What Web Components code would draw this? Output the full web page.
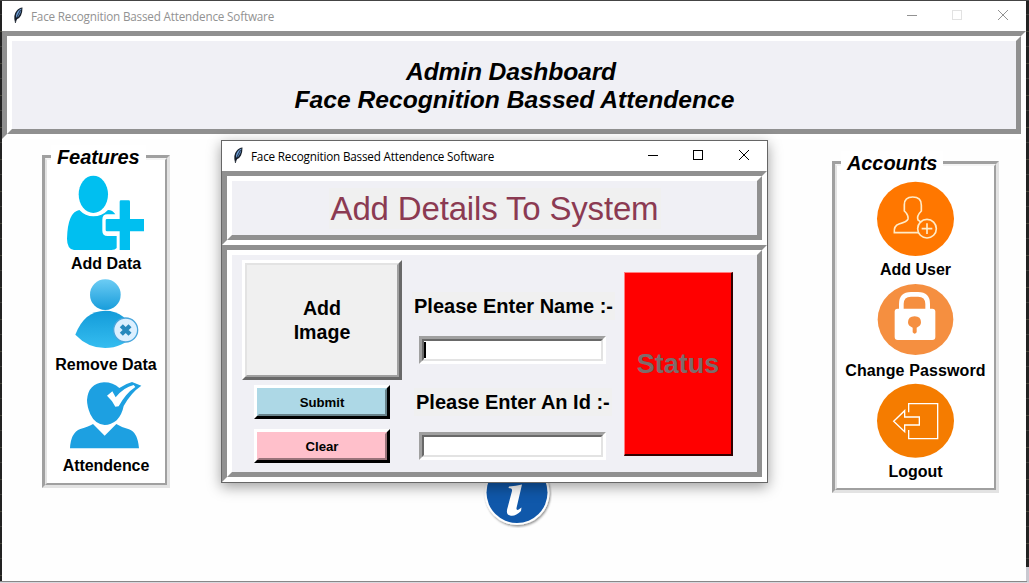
<!DOCTYPE html>
<html lang="en">
<head>
<meta charset="utf-8">
<title>Face Recognition Bassed Attendence Software</title>
<style>
html,body{margin:0;height:100%;overflow:hidden}
body{font-family:"Liberation Sans",Arial,sans-serif;color:#000}
</style>
</head>
<body>
<attendance-desktop></attendance-desktop>
<script>
function define(name, html) {
  const t = document.createElement('template');
  t.innerHTML = html;
  customElements.define(name, class extends HTMLElement {
    constructor() {
      super();
      this.attachShadow({mode: 'open'}).appendChild(t.content.cloneNode(true));
    }
  });
}

define('title-bar', `
<style>
:host{display:flex;align-items:center;height:30px;background:#fff;color:var(--fg,#000);box-sizing:border-box;padding-left:9px;flex:none}
.feather{width:14px;height:18px;margin:-2px 6px 0 0}
.name{flex:1;font:11.7px/30px "Open Sans","Noto Sans",sans-serif;letter-spacing:-.18px;white-space:nowrap}
.ctl{width:46px;height:30px;flex:none;display:block;shape-rendering:crispEdges;margin-right:-1px}
.ctl path,.ctl rect{fill:none;stroke:currentColor}
.max{color:var(--max,#000)}
.ctl.close{shape-rendering:auto;margin-right:0}
</style>
<svg class="feather" viewBox="0 0 14 18"><path d="M4 16.500 Q2 9 5.500 5 Q8 1.500 11.500 1.500 Q11.500 6 10 9.500 Q8.500 12.500 5.500 13.500Z" fill="#17202c"/><path d="M5 12 Q4.500 7.500 7.500 4.500 Q9 3 10.500 2.500 Q10 7 7.500 10.500" fill="#6d9dd4"/><path d="M4.300 17 L6 11 L9.500 4" stroke="#0b1220" stroke-width=".8" fill="none"/></svg>
<span class="name"><slot></slot></span>
<svg class="ctl" viewBox="0 0 46 30"><path d="M17 14.500H27"/></svg>
<svg class="ctl max" viewBox="0 0 46 30"><rect x="17.500" y="9.500" width="9" height="9"/></svg>
<svg class="ctl close" viewBox="0 0 46 30"><path d="M18 9 L28 19 M28 9 L18 19"/></svg>`);

define('groove-frame', `
<style>
:host{display:block;box-sizing:border-box;border:5px solid;border-color:#909090 #fff #fff #909090}
.in{height:100%;box-sizing:border-box;border:5px solid;border-color:#fff #909090 #909090 #fff;background:#f0f0f5}
</style><div class="in"><slot></slot></div>`);

define('label-frame', `
<style>
:host{display:block;box-sizing:border-box;border:3px solid;border-color:#a0a0a0 #e3e3e3 #e3e3e3 #a0a0a0;background:#fff}
.in{height:100%;box-sizing:border-box;border:2px solid;border-color:#f4f4f4 #a0a0a0 #a0a0a0 #e3e3e3;display:flex;flex-direction:column;align-items:center}
.legend{align-self:flex-start;background:#fff;font:italic bold 20px/24px "Liberation Sans",Arial,sans-serif;letter-spacing:-.1px;margin:-15px 0 1px 4px;padding:0 6px;height:24px;white-space:nowrap}
</style><div class="in"><span class="legend"><slot name="legend"></slot></span><slot></slot></div>`);

define('icon-action', `
<style>
:host{display:flex;flex-direction:column;align-items:center;font:bold 16px/24px "Liberation Sans",Arial,sans-serif;letter-spacing:var(--ls,0);white-space:nowrap}
.t{margin-top:var(--gap,0);padding-top:1px;margin-bottom:-1px}
</style><slot name="icon"></slot><span class="t"><slot></slot></span>`);

define('relief-button', `
<style>
:host{display:block;box-sizing:border-box;border:3px solid;border-color:#fff var(--dark) var(--dark) #fff}
.in{height:100%;box-sizing:border-box;border:2px solid;border-color:var(--hi) var(--lo) var(--lo) var(--hi);background:var(--bg);display:flex;align-items:center;justify-content:center;text-align:center;font-weight:bold}
</style><div class="in"><slot></slot></div>`);

define('sunken-entry', `
<style>
:host{display:block;box-sizing:border-box;width:187px;height:28px;border:3px solid;border-color:#a0a0a0 #fff #fff #a0a0a0}
.in{height:100%;box-sizing:border-box;border:2px solid;border-color:#696969 #e3e3e3 #e3e3e3 #696969;background:#fff;padding-top:1px}
.caret{display:none;width:2px;height:16px;background:#000}
:host([focused]) .caret{display:block}
</style><div class="in"><div class="caret"></div></div>`);

define('main-window', `
<style>
:host{display:flex;flex-direction:column;background:#fefefe;width:1024px;height:580px;--fg:#929292;--max:#e2e2e2}
groove-frame{height:108px;flex:none}
h1{margin:0;height:100%;box-sizing:border-box;display:flex;flex-direction:column;justify-content:center;align-items:center;font:italic bold 24.65px/28px "Liberation Sans",Arial,sans-serif;white-space:nowrap;padding:1px 0 0 1px}
h1 span{display:block}
h1 span:first-child{letter-spacing:-.15px;margin-right:7px}
.body{display:flex;align-items:flex-start;justify-content:space-between;padding:16px 27px 0 40px}
.f{width:128px;height:333px}
.a{width:167px;height:332px;margin-top:6px}
.info{width:70px;height:70px;margin-top:303px;margin-left:32px}
icon-action svg{display:block}
.f svg{margin-left:-2px}
</style>
<title-bar>Face Recognition Bassed Attendence Software</title-bar>
<groove-frame><h1><span>Admin Dashboard</span><span>Face Recognition Bassed Attendence</span></h1></groove-frame>
<div class="body">
<label-frame class="f"><span slot="legend">Features</span>
<icon-action style="margin-top:5px"><svg slot="icon" width="80" height="76" viewBox="105 105 240 228"><g fill="#00bff0"><ellipse cx="190" cy="163" rx="44" ry="56"/><path d="M148 210 Q166 229 190 229 Q216 229 234 210 Q248 210 256 223 H232 Q217 223 217 239 V272 Q217 288 233 288 H260 V324 Q256 330 244 330 H132 Q111 327 111 296 Q113 216 148 210Z"/><path d="M273 181H296Q300 181 300 185V237H342V274H300V330H269V274H231Q227 274 227 270V241Q227 237 231 237H269V185Q269 181 273 181Z"/></g></svg>Add Data</icon-action>
<icon-action style="margin-top:3px;--gap:3px"><svg slot="icon" style="margin-left:1px" width="66" height="71" viewBox="132 -96 198 213"><defs><linearGradient id="h" x2="0" y2="1"><stop stop-color="#6cccf4"/><stop offset="1" stop-color="#189ddb"/></linearGradient><linearGradient id="b" x2="0" y2="1"><stop stop-color="#139bd9"/><stop offset="1" stop-color="#35bdf0"/></linearGradient></defs><circle cx="226" cy="-46" r="46" fill="url(#h)"/><path d="M136 74 Q163 2 226 2 Q287 2 315 72 Q278 114 225 114 Q174 114 136 74Z" fill="url(#b)"/><circle cx="287" cy="60" r="36" fill="#dcf0ff" stroke="#49a6dc" stroke-width="4"/><path d="M274 47 L300 73 M300 47 L274 73" stroke="#2789bd" stroke-width="13"/></svg>Remove Data</icon-action>
<icon-action style="margin-top:5px;--gap:3px;--ls:-.05px"><svg slot="icon" style="margin-left:0" width="73" height="69" viewBox="120 211 219 207"><path d="M225 215 Q253 215 271 232 Q290 219 309 214 L337 225 Q306 246 284 286 Q279 312 263 329 Q246 343 227 343 Q198 341 184 311 Q174 287 174 268 Q178 218 225 215Z" fill="#1da0e1"/><path d="M234 255 L250 242 L260 260 Q284 230 314 223 L319 229 Q290 248 269 287 L259 288 Q248 267 234 255Z" fill="#fff"/><path d="M192 340 L227 375 L262 340 Q277 350 300 356 Q326 365 330 413 H123 Q125 366 154 355 Q180 347 192 340Z" fill="#1da0e1"/></svg>Attendence</icon-action>
</label-frame>
<svg class="info" viewBox="0 0 70 70"><defs><filter id="s" x="-20%" y="-20%" width="140%" height="140%"><feDropShadow dx="1" dy="1.500" stdDeviation="1" flood-opacity=".45"/></filter></defs><circle cx="35" cy="34.500" r="32.500" fill="#fff" filter="url(#s)"/><circle cx="35" cy="34.500" r="30.500" fill="#1058aa"/><path d="M27 28.500 Q34 28 40 26.500 L34.500 50 Q34 54 39.500 49.500 L39 53 Q33 59 28 57.500 Q23.500 56.500 25.500 50 L30 33 Q30.500 30 26.500 30Z" fill="#fff"/><circle cx="38" cy="19" r="4" fill="#fff"/></svg>
<label-frame class="a"><span slot="legend">Accounts</span>
<icon-action style="margin-top:5px"><svg slot="icon" width="79" height="76" viewBox="168 108 237 228"><ellipse cx="286.500" cy="221.500" rx="115.500" ry="111.500" fill="#ff7700"/><g fill="none" stroke="#ffebc8" stroke-width="5"><path d="M296 263 H223 Q221 242 237 237 Q262 230 264 222 Q266 210 253 198 V179 Q253 156 278 156 Q305 156 304 181 V198 Q289 213 294 225 L304 232"/><circle cx="321" cy="251" r="28"/><path d="M321 235V267M305 251H337"/></g></svg>Add User</icon-action>
<icon-action style="margin-top:2px;--gap:2px;--ls:.12px"><svg slot="icon" width="77" height="73" viewBox="171 -111 231 219"><ellipse cx="286.500" cy="-1.500" rx="113.500" ry="106.500" fill="#f58f40"/><path d="M244 -30 V-48 Q244 -77 273 -77 H294 Q323 -77 323 -48 V-30" fill="none" stroke="#fff" stroke-width="14"/><rect x="224" y="-34" width="122" height="94" rx="9" fill="#fff"/><path d="M278 23 Q264 18 264 7 Q264 -11 284 -11 Q303 -11 303 7 Q303 18 290 23 V37 Q284 45 278 37Z" fill="#f58f40"/></svg>Change Password</icon-action>
<icon-action style="margin-top:1px"><svg slot="icon" width="79" height="76" viewBox="168 189 237 228"><ellipse cx="286.500" cy="302.500" rx="115.500" ry="111" fill="#f57c00"/><g fill="none" stroke="#fff" stroke-width="4"><path d="M266 277V251H353V356H266V330"/><path d="M221 304 L254 272 V291 H298 V315 H254 V335Z"/></g></svg>Logout</icon-action>
</label-frame>
</div>`);

define('details-dialog', `
<style>
:host{display:flex;flex-direction:column;box-sizing:border-box;width:547px;height:343px;border:1px solid #666;background:#fff;box-shadow:0 4px 13px rgba(0,0,0,.38)}
.head{height:74px;flex:none}
.head h2{margin:7px auto 0;width:332px;height:41px;background:#f0f0f0;color:#8b3a52;font:33px/41px "Liberation Sans",Arial,sans-serif;letter-spacing:-.17px;text-align:center;white-space:nowrap}
.head{--x:0}
.headwrap{display:flow-root}
.form{height:237px;flex:none}
.cols{display:flex;align-items:flex-start}
.left{margin:5px 0 0 10px;width:160px;display:flex;flex-direction:column;align-items:center}
.img{width:160px;height:120px;font-size:19.6px;line-height:24px;--bg:#f0f0f0;--hi:#e3e3e3;--lo:#a0a0a0;--dark:#696969}
.small{width:136px;height:34px;font-size:13.2px;--dark:#000}
.sub{margin-top:5px;--bg:#add8e6;--hi:#add8e6;--lo:#68828a}
.clr{margin-top:10px;--bg:#ffc0cb;--hi:#ffc0cb;--lo:#99737a}
.mid{margin:37px 0 0 10px;width:204px;display:flex;flex-direction:column;align-items:flex-start}
label{display:block;background:#f0f0f0;font:bold 20px/28px "Liberation Sans",Arial,sans-serif;white-space:nowrap;padding:0 2px}
.l1{margin-left:0}
.l2{margin-left:2px}
.mid sunken-entry{margin-left:7px}
.mid .e1{margin-top:16px;margin-bottom:24px}
.mid .e2{margin-top:16px}
.status{box-sizing:border-box;margin:17px 0 0 8px;width:109px;height:184px;background:#f00;border:solid;border-width:1px 2px 2px 1px;border-color:#ff8080 #300 #300 #ff8080;color:#7d6b6b;font:bold 27px/182px "Liberation Sans",Arial,sans-serif;text-align:center}
</style>
<title-bar>Face Recognition Bassed Attendence Software</title-bar>
<groove-frame class="head"><div class="headwrap"><h2>Add Details To System</h2></div></groove-frame>
<groove-frame class="form"><div class="cols">
<div class="left"><relief-button class="img">Add<br>Image</relief-button><relief-button class="small sub">Submit</relief-button><relief-button class="small clr">Clear</relief-button></div>
<div class="mid"><label class="l1">Please Enter Name :-</label><sunken-entry class="e1" focused></sunken-entry><label class="l2">Please Enter An Id :-</label><sunken-entry class="e2"></sunken-entry></div>
<div class="status">Status</div>
</div></groove-frame>`);

define('attendance-desktop', `
<style>
:host{display:block;box-sizing:border-box;position:relative;width:1029px;height:583px;padding:1px 0 0 2px;
background:linear-gradient(#d8d8de,#d8d8de) 0 582px/100% 1px no-repeat,linear-gradient(#888,#888) 0 581px/1027px 1px no-repeat,linear-gradient(#c8c8d0,#c8c8d0) 1026px 567px/3px 16px no-repeat,linear-gradient(#444,#444) 0 0/100% 1px no-repeat,repeating-linear-gradient(#222 0 14px,#3b3b38 14px 15px,#222 15px 31px,#444438 31px 32px)}
details-dialog{position:absolute;left:221px;top:140px}
</style>
<main-window></main-window>
<details-dialog></details-dialog>`);
</script>
</body>
</html>
